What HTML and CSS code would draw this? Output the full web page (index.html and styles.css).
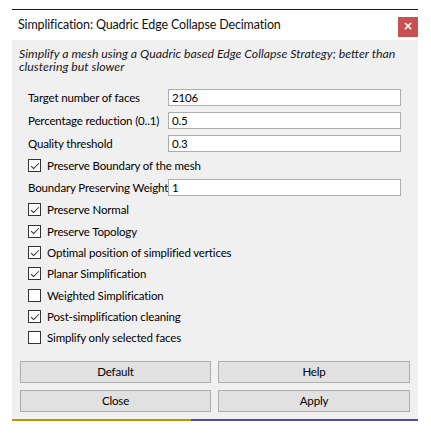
FILE: index.html
```html
<!DOCTYPE html>
<html>
<head>
<meta charset="utf-8">
<link rel="stylesheet" href="styles.css">
</head>
<body>
<div class="window">
  <div class="titlebar">
    <span class="title">Simplification: Quadric Edge Collapse Decimation</span>
    <span class="close">×</span>
  </div>
  <div class="body">
    <p class="desc">Simplify a mesh using a Quadric based Edge Collapse Strategy; better than clustering but slower</p>
    <div class="form">
      <div class="row field"><span class="label">Target number of faces</span><span class="input">2106</span></div>
      <div class="row field"><span class="label">Percentage reduction (0..1)</span><span class="input">0.5</span></div>
      <div class="row field"><span class="label">Quality threshold</span><span class="input">0.3</span></div>
      <div class="row check"><span class="box on"></span><span>Preserve Boundary of the mesh</span></div>
      <div class="row field"><span class="label">Boundary Preserving Weight</span><span class="input">1</span></div>
      <div class="row check"><span class="box on"></span><span>Preserve Normal</span></div>
      <div class="row check"><span class="box on"></span><span>Preserve Topology</span></div>
      <div class="row check"><span class="box on"></span><span>Optimal position of simplified vertices</span></div>
      <div class="row check"><span class="box on"></span><span>Planar Simplification</span></div>
      <div class="row check"><span class="box"></span><span>Weighted Simplification</span></div>
      <div class="row check"><span class="box on"></span><span>Post-simplification cleaning</span></div>
      <div class="row check"><span class="box"></span><span>Simplify only selected faces</span></div>
    </div>
    <div class="buttons">
      <div class="btn">Default</div>
      <div class="btn">Help</div>
      <div class="btn">Close</div>
      <div class="btn">Apply</div>
    </div>
  </div>
  <div class="bottom"><span class="yellow"></span><span class="blue"></span></div>
</div>
</body>
</html>
```
FILE: styles.css
```css
html, body { margin: 0; padding: 0; background: #fff; }
body { font-family: Lato, "Noto Sans", sans-serif; font-size: 11.5px; letter-spacing: -0.15px; color: #000; }
.window { margin: 9px 0 0 12px; width: 406px; border-top: 1px solid #1a1a1a; }
.titlebar { height: 30px; background: #fff; display: flex; align-items: flex-start; justify-content: space-between; }
.title { font-size: 12.5px; letter-spacing: -0.15px; margin: 6px 0 0 6px; line-height: 18px; color: #111; white-space: nowrap; }
.close { width: 20px; height: 20px; margin-top: 7px; background: #c75050; color: #fff; font-family: "DejaVu Sans", sans-serif; font-size: 12px; font-weight: bold; line-height: 19px; text-align: center; letter-spacing: 0; }
.body { background: #f0f0f0; height: 379px; padding: 0; box-sizing: border-box; overflow: hidden; }
.desc { margin: 0; padding: 7px 2px 0 7px; font-style: italic; line-height: 13px; font-size: 12.3px; letter-spacing: 0; color: #1a1a1a; }
.form { padding: 13px 17px 0 16px; display: flex; flex-direction: column; }
.row { display: flex; align-items: center; white-space: nowrap; }
.field { height: 17px; margin: 3px 0; }
.label { width: 140px; flex: none; }
.input { flex: 1; height: 17px; box-sizing: border-box; border: 1px solid #adadad; background: #fff; padding-left: 3px; line-height: 15px; }
.check { height: 21.33px; }
.box { width: 13px; height: 13px; flex: none; box-sizing: border-box; border: 1px solid #333; background: #fff; margin-right: 6px; position: relative; }
.box.on::after { content: ""; position: absolute; left: 3.5px; top: 0.5px; width: 3px; height: 7px; border: solid #333; border-width: 0 1px 1px 0; transform: rotate(45deg); }
.buttons { display: grid; grid-template-columns: 191px 192px; column-gap: 7px; row-gap: 7px; padding: 12px 0 0 8px; }
.btn { height: 22px; box-sizing: border-box; border: 1px solid #adadad; background: #e1e1e1; text-align: center; line-height: 20px; }
.bottom { display: flex; height: 2px; }
.yellow { width: 179px; background: #b89a00; }
.blue { flex: 1; background: #4a4ab0; }
```
